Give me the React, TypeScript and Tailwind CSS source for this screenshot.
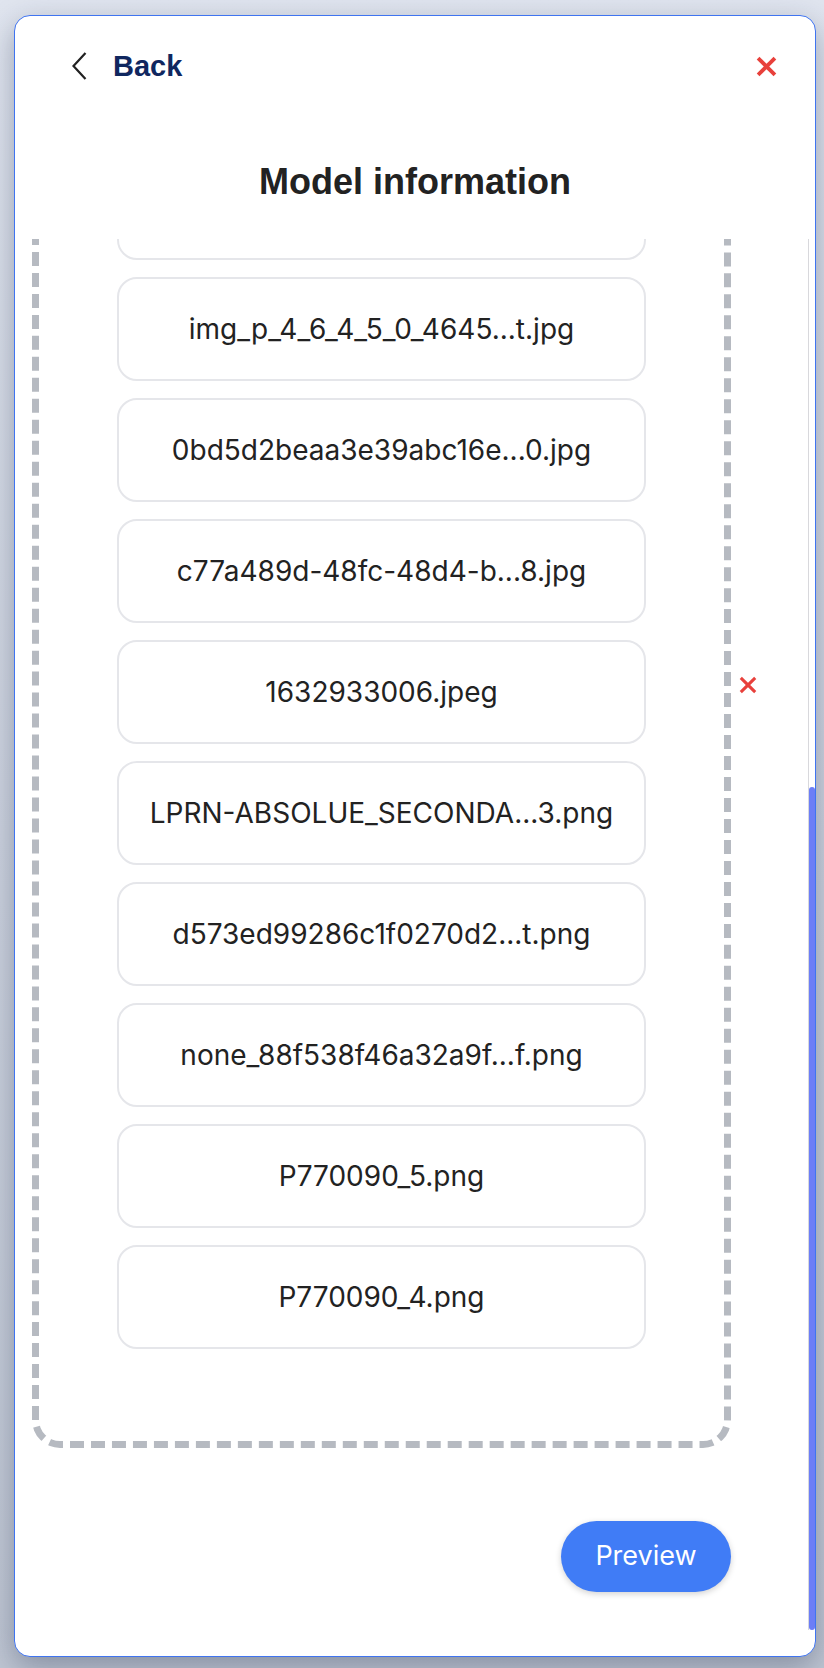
import React, { useLayoutEffect, useRef } from 'react';

const files = [
  'screenshot_0912.png',
  'img_p_4_6_4_5_0_4645...t.jpg',
  '0bd5d2beaa3e39abc16e...0.jpg',
  'c77a489d-48fc-48d4-b...8.jpg',
  '1632933006.jpeg',
  'LPRN-ABSOLUE_SECONDA...3.png',
  'd573ed99286c1f0270d2...t.png',
  'none_88f538f46a32a9f...f.png',
  'P770090_5.png',
  'P770090_4.png',
];

const ChevronLeft = () => (
  <svg width="15" height="28" viewBox="0 0 15 28" fill="none">
    <polyline points="13.5,1 1.5,14 13.5,27" stroke="#222222" strokeWidth="2.2" strokeLinejoin="miter" />
  </svg>
);

const RedX = ({ size, stroke }: { size: number; stroke: number }) => (
  <svg width={size} height={size} viewBox="0 0 20 20" fill="none">
    <line x1="2" y1="2" x2="18" y2="18" stroke="#e8403b" strokeWidth={stroke} />
    <line x1="18" y1="2" x2="2" y2="18" stroke="#e8403b" strokeWidth={stroke} />
  </svg>
);

const FileRow = ({ name, removable }: { name: string; removable?: boolean }) => (
  <div className="relative">
    <div className="h-[104px] rounded-[20px] border-2 border-[#e5e6ea] bg-white flex items-center justify-center text-[28px] text-[#222222] font-['Inter',sans-serif] whitespace-nowrap">
      {name}
    </div>
    {removable && (
      <button className="absolute left-[622px] top-[36px]">
        <RedX size={18} stroke={3.4} />
      </button>
    )}
  </div>
);

export default function App() {
  const scrollRef = useRef<HTMLDivElement>(null);

  // list opens scrolled to the end
  useLayoutEffect(() => {
    const el = scrollRef.current;
    if (el) el.scrollTop = el.scrollHeight;
  }, []);

  return (
    <div className="w-[824px] h-[1668px] overflow-hidden bg-gradient-to-b from-[#e0e5ef] via-[#cdd3df] to-[#bfc6d3] pt-[15px] pl-[14px]">
      <div className="w-[802px] h-[1642px] rounded-[16px] border border-[#3f74f0] bg-white flex flex-col overflow-hidden shadow-[0_10px_30px_rgba(30,40,70,0.35)]">
        {/* header */}
        <div className="h-[100px] shrink-0 flex items-center justify-between pl-[57px] pr-[38px]">
          <button className="flex items-center gap-[26px]">
            <ChevronLeft />
            <span className="text-[29px] font-bold text-[#10275f] font-['Liberation_Sans',Arial,sans-serif] leading-none">Back</span>
          </button>
          <button>
            <RedX size={21} stroke={3.6} />
          </button>
        </div>

        <div className="h-[123px] shrink-0 flex items-center justify-center pt-[9px]">
          <h1 className="text-[36px] leading-[40px] font-bold text-[#222222] font-['Liberation_Sans',Arial,sans-serif]">Model information</h1>
        </div>

        {/* scroll region */}
        <div className="h-[1391px] shrink-0 flex">
          <div ref={scrollRef} className="flex-1 overflow-hidden">
            <div className="ml-[17px] w-[699px] flex flex-col">
              <div className="rounded-[28px] border-[7px] border-dashed border-[#b6bac1] px-[78px] pt-[40px] pb-[92px] flex flex-col gap-[17px]">
                {files.map((f) => (
                  <FileRow key={f} name={f} removable={f === '1632933006.jpeg'} />
                ))}
              </div>
              <button className="self-end mt-[73px] mb-[38px] w-[170px] h-[71px] rounded-full bg-[#407cf6] text-white text-[27px] font-['Inter',sans-serif] shadow-[0_2px_6px_rgba(0,0,0,0.18)]">
                Preview
              </button>
            </div>
          </div>
          <div className="w-[7px] shrink-0 border-l border-[#d8d8dc] bg-white flex flex-col justify-end">
            <div className="h-[843px] rounded-full bg-[#6c7ef6]" />
          </div>
        </div>
      </div>
    </div>
  );
}
